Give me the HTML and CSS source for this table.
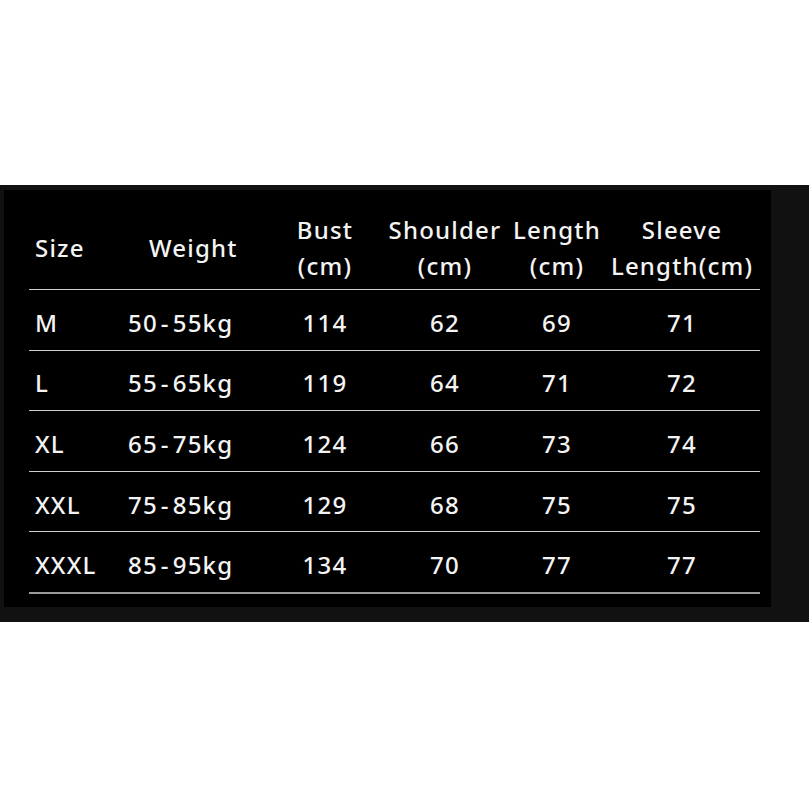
FILE: index.html
```html
<!DOCTYPE html>
<html>
<head>
<meta charset="utf-8">
<link rel="stylesheet" href="styles.css">
</head>
<body>
<div class="page">
  <div class="panel">
    <div class="inner">
      <div class="chart">
        <div class="row head">
          <div class="c c1">Size</div>
          <div class="c c2 hw">Weight</div>
          <div class="c c3">Bust<br>(cm)</div>
          <div class="c c4">Shoulder<br>(cm)</div>
          <div class="c c5">Length<br>(cm)</div>
          <div class="c c6">Sleeve<br>Length(cm)</div>
        </div>
        <div class="row">
          <div class="c c1">M</div><div class="c c2">50<span class="dash">-</span>55kg</div><div class="c c3">114</div><div class="c c4">62</div><div class="c c5">69</div><div class="c c6">71</div>
        </div>
        <div class="row">
          <div class="c c1">L</div><div class="c c2">55<span class="dash">-</span>65kg</div><div class="c c3">119</div><div class="c c4">64</div><div class="c c5">71</div><div class="c c6">72</div>
        </div>
        <div class="row">
          <div class="c c1">XL</div><div class="c c2">65<span class="dash">-</span>75kg</div><div class="c c3">124</div><div class="c c4">66</div><div class="c c5">73</div><div class="c c6">74</div>
        </div>
        <div class="row">
          <div class="c c1">XXL</div><div class="c c2">75<span class="dash">-</span>85kg</div><div class="c c3">129</div><div class="c c4">68</div><div class="c c5">75</div><div class="c c6">75</div>
        </div>
        <div class="row last">
          <div class="c c1">XXXL</div><div class="c c2">85<span class="dash">-</span>95kg</div><div class="c c3">134</div><div class="c c4">70</div><div class="c c5">77</div><div class="c c6">77</div>
        </div>
      </div>
    </div>
  </div>
</div>
</body>
</html>
```
FILE: styles.css
```css
html, body {
  margin: 0;
  padding: 0;
  background: #ffffff;
}
.page {
  padding-top: 185px;
  height: 809px;
  box-sizing: border-box;
}
.panel {
  background: #111111;
  padding: 5px 38px 15px 4px;
}
.inner {
  background: #000000;
  padding: 0 11px 13px 25px;
}
.chart {
  font-family: "Noto Sans", "Open Sans", sans-serif;
  font-size: 24px;
  font-weight: 500;
  letter-spacing: 1.2px;
  color: #f4f4f4;
}
.row {
  display: grid;
  grid-template-columns: 91px 150px 110px 130px 94px 156px;
  align-items: center;
  height: 60.6px;
  padding-top: 5px;
  box-sizing: border-box;
  border-bottom: 1px solid #cfcfcf;
}
.row.head {
  height: 100px;
  padding-top: 17px;
  line-height: 36px;
}
.row.last {
  border-bottom: 2px solid #9a9a9a;
  height: 61.6px;
}
.c {
  white-space: nowrap;
}
.c1 {
  padding-left: 6px;
}
.c2 {
  padding-left: 8px;
}
.c2.hw {
  padding-left: 29px;
}
.dash {
  margin: 0 3px;
}
.c3, .c4, .c5, .c6 {
  text-align: center;
}
```
